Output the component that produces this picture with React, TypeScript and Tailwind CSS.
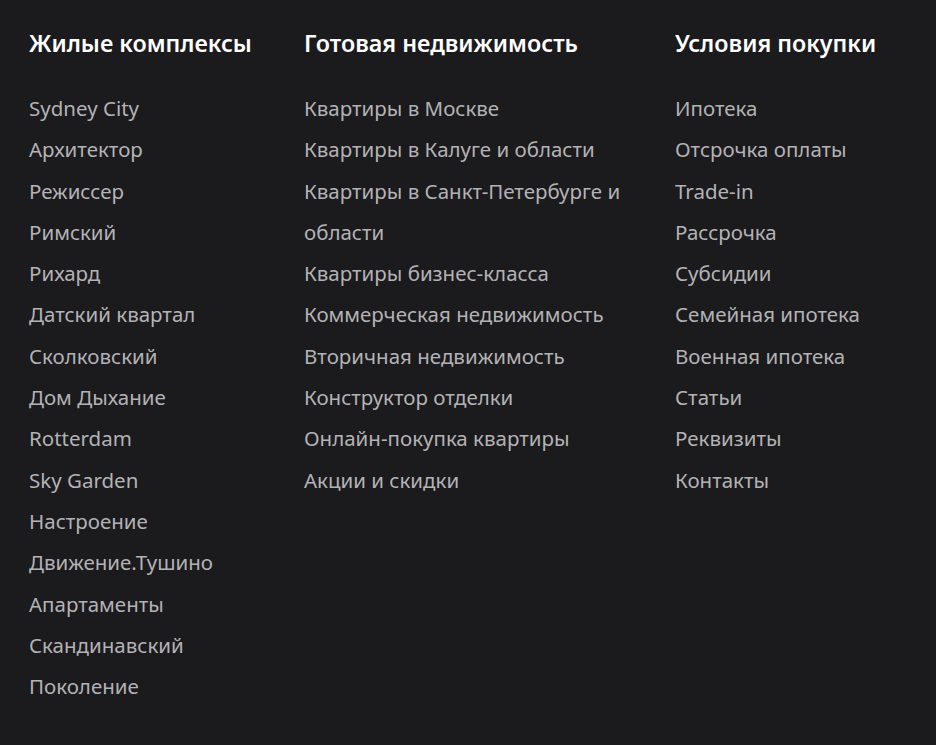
import React from 'react';

interface FooterColumnProps {
  title: string;
  links: string[];
  className?: string;
}

const columns: FooterColumnProps[] = [
  {
    title: 'Жилые комплексы',
    className: 'w-[275px]',
    links: [
      'Sydney City',
      'Архитектор',
      'Режиссер',
      'Римский',
      'Рихард',
      'Датский квартал',
      'Сколковский',
      'Дом Дыхание',
      'Rotterdam',
      'Sky Garden',
      'Настроение',
      'Движение.Тушино',
      'Апартаменты',
      'Скандинавский',
      'Поколение',
    ],
  },
  {
    title: 'Готовая недвижимость',
    className: 'w-[371px] pr-[30px]',
    links: [
      'Квартиры в Москве',
      'Квартиры в Калуге и области',
      'Квартиры в Санкт-Петербурге и области',
      'Квартиры бизнес-класса',
      'Коммерческая недвижимость',
      'Вторичная недвижимость',
      'Конструктор отделки',
      'Онлайн-покупка квартиры',
      'Акции и скидки',
    ],
  },
  {
    title: 'Условия покупки',
    className: 'w-[240px]',
    links: [
      'Ипотека',
      'Отсрочка оплаты',
      'Trade-in',
      'Рассрочка',
      'Субсидии',
      'Семейная ипотека',
      'Военная ипотека',
      'Статьи',
      'Реквизиты',
      'Контакты',
    ],
  },
];

const FooterColumn: React.FC<FooterColumnProps> = ({ title, links, className }) => (
  <div className={className}>
    <h3 className="text-[23.3px] leading-[30px] font-semibold text-white">{title}</h3>
    <ul className="mt-[30px] flex flex-col">
      {links.map((link) => (
        <li key={link}>
          <a href="#" className="text-[20.5px] leading-[41.3px] text-[#b3b3b5] hover:text-white">
            {link}
          </a>
        </li>
      ))}
    </ul>
  </div>
);

export default function App() {
  return (
    <div
      className="min-h-[745px] w-full bg-[#1b1a1d] pl-[29px] pt-[28px]"
      style={{ fontFamily: '"Noto Sans", "Open Sans", sans-serif' }}
    >
      <div className="flex">
        {columns.map((col) => (
          <FooterColumn key={col.title} {...col} />
        ))}
      </div>
    </div>
  );
}
